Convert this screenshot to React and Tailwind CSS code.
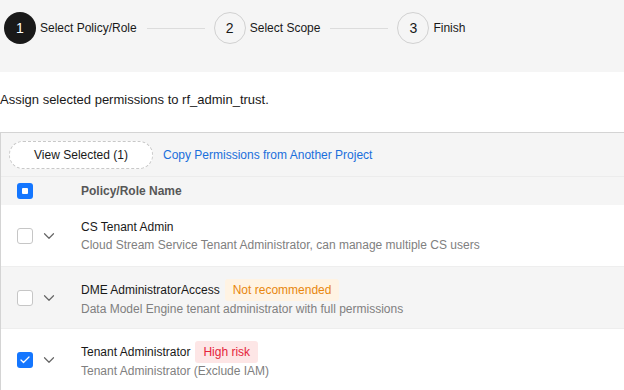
import { Check, ChevronDown } from 'lucide-react';

const steps = [
    { n: 1, label: 'Select Policy/Role', active: true },
    { n: 2, label: 'Select Scope' },
    { n: 3, label: 'Finish' },
];

const rows = [
    {
        name: 'CS Tenant Admin',
        desc: 'Cloud Stream Service Tenant Administrator, can manage multiple CS users',
    },
    {
        name: 'DME AdministratorAccess',
        desc: 'Data Model Engine tenant administrator with full permissions',
        tag: 'Not recommended',
        tagClass: 'bg-[#fff3e3] text-[#e8870e]',
        hover: true,
    },
    {
        name: 'Tenant Administrator',
        desc: 'Tenant Administrator (Exclude IAM)',
        tag: 'High risk',
        tagClass: 'bg-[#fde6e6] text-[#e5243b]',
        checked: true,
    },
];

function Box({ checked }) {
    if (checked) {
        return (
            <span className="flex h-4 w-4 items-center justify-center rounded-[3px] bg-[#1476ff]">
                <Check className="h-3 w-3 text-white" strokeWidth={2.5} />
            </span>
        );
    }
    return <span className="h-4 w-4 rounded-[3px] border border-[#c6c6c6] bg-white" />;
}

export default function App() {
    return (
        <div className="h-[390px] w-[624px] overflow-hidden bg-white font-['Liberation_Sans',Arial,sans-serif] text-xs text-[#191919]">
            <div className="flex h-[72px] items-start bg-[#f5f5f5] pl-1 pt-3">
                {steps.map((s, i) => (
                    <div key={s.n} className="flex items-center">
                        <span
                            className={
                                s.active
                                    ? 'flex h-8 w-8 items-center justify-center rounded-full bg-[#191919] text-sm text-white'
                                    : 'flex h-8 w-8 items-center justify-center rounded-full border border-[#d1d1d1] text-sm text-[#191919]'
                            }
                        >
                            {s.n}
                        </span>
                        <span className={s.active ? 'ml-1 font-medium text-[#191919]' : 'ml-1 text-[#191919]'}>{s.label}</span>
                        {i < steps.length - 1 && <span className="ml-[10px] mr-[9px] h-px w-[58px] bg-[#dcdcdc]" />}
                    </div>
                ))}
            </div>

            <p className="mt-5 text-[13px] leading-4 text-[#191919]">Assign selected permissions to rf_admin_trust.</p>

            <div className="mt-6 border-l border-t border-[#d4d4d4]">
                <div className="flex h-11 items-center gap-[10px] border-b border-[#ececec] bg-[#f5f5f5] pl-2">
                    <button className="h-7 w-[144px] rounded-full border border-dashed border-[#c8c8c8] bg-white text-xs text-[#191919]">
                        View Selected (1)
                    </button>
                    <a className="text-xs text-[#1a6fdc]">Copy Permissions from Another Project</a>
                </div>

                <div className="flex h-[28px] items-center bg-[#f5f5f5]">
                    <span className="ml-4 flex h-4 w-4 items-center justify-center rounded-[3px] bg-[#1476ff]">
                        <span className="h-[6px] w-[6px] rounded-[1px] bg-white" />
                    </span>
                    <span className="ml-12 font-bold text-[#575757]">Policy/Role Name</span>
                </div>

                {rows.map((r) => (
                    <div
                        key={r.name}
                        className={
                            r.hover
                                ? 'flex h-[62px] items-center border-b border-[#eeeeee] bg-[#f5f5f5]'
                                : 'flex h-[62px] items-center border-b border-[#eeeeee] bg-white'
                        }
                    >
                        <span className="ml-4 flex">
                            <Box checked={r.checked} />
                        </span>
                        <ChevronDown className="ml-[7px] h-[18px] w-[18px] text-[#666]" strokeWidth={1.6} />
                        <div className="ml-[23px] flex flex-col">
                            <div className="flex items-center">
                                <span className="text-[#191919]">{r.name}</span>
                                {r.tag && (
                                    <span className={'ml-[5px] rounded-[3px] px-2 py-[3px] text-xs leading-4 ' + r.tagClass}>
                                        {r.tag}
                                    </span>
                                )}
                            </div>
                            <span className={r.tag ? 'text-[#808080]' : 'mt-[2px] text-[#808080]'}>{r.desc}</span>
                        </div>
                    </div>
                ))}
            </div>
        </div>
    );
}
